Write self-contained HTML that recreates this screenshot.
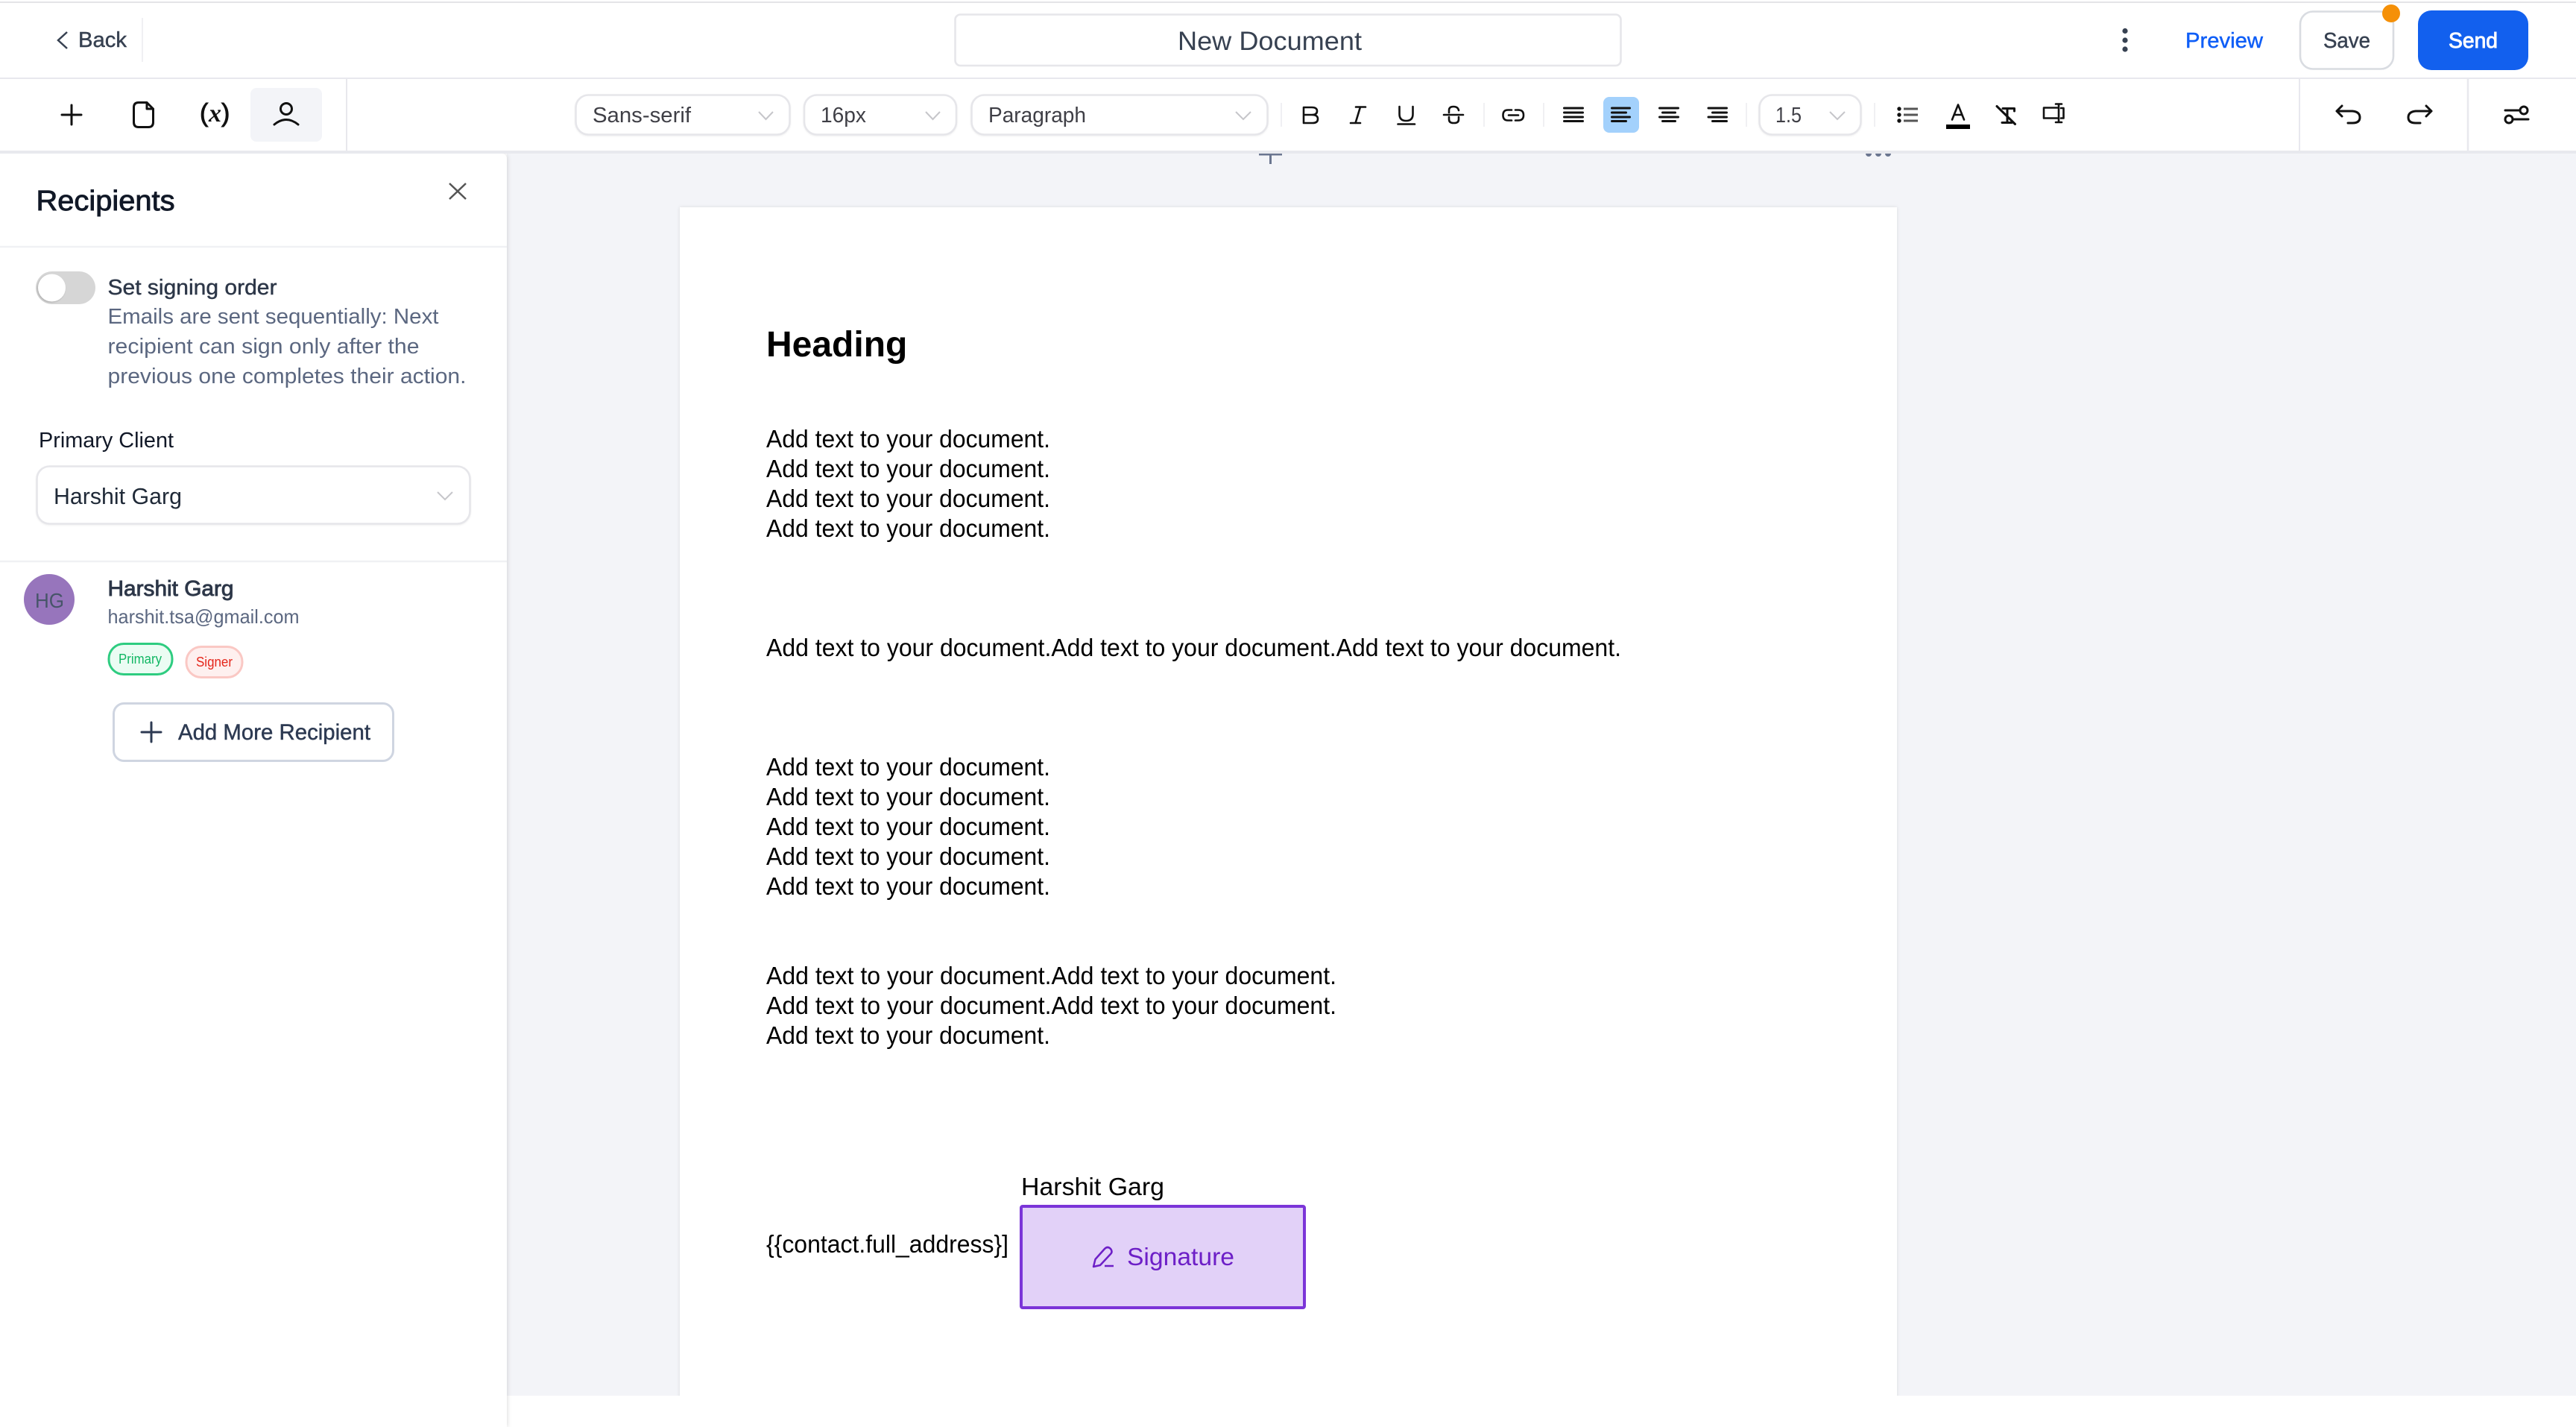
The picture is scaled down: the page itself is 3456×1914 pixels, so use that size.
<!DOCTYPE html>
<html lang="en"><head><meta charset="utf-8"><title>New Document</title>
<style>
html,body{margin:0;padding:0;background:#fff;width:3456px;height:1914px;overflow:hidden}
svg{display:block}
text{font-family:"Liberation Sans",sans-serif;white-space:pre}
.m{stroke:currentColor;stroke-width:.45px}
.sb{stroke:currentColor;stroke-width:.9px}
.d{font-size:33px;fill:#000}
.ic{fill:none;stroke:#111;stroke-width:3;stroke-linecap:round;stroke-linejoin:round}
.thin{stroke-width:2.6}
.box{fill:#fff;stroke:#e6e6ea;stroke-width:2.6;filter:drop-shadow(0 1px 1px rgba(0,0,0,.06))}
.chev{fill:none;stroke:#c6c6ca;stroke-width:2}
.sep{stroke:#f0f0f3;stroke-width:2}
.tb{font-size:28.5px;fill:#3f3f46}
</style></head><body>
<svg xmlns="http://www.w3.org/2000/svg" width="3456" height="1914" viewBox="0 0 3456 1914">
<defs>
<filter id="sh" x="-5%" y="-5%" width="110%" height="110%"><feDropShadow dx="0" dy="0" stdDeviation="2.500" flood-color="#000" flood-opacity=".1"/></filter>
<filter id="sh2" x="-5%" y="-5%" width="110%" height="110%"><feDropShadow dx="1" dy="0" stdDeviation="3" flood-color="#000" flood-opacity=".13"/></filter>
</defs>
<rect width="3456" height="1914" fill="#fff"/>
<!-- canvas -->
<rect x="680" y="206" width="2776" height="1666" fill="#f3f4f8"/>
<path d="M1689 207H1720M1704.500 207V220" fill="none" stroke="#6b7690" stroke-width="3"/>
<circle cx="2507" cy="206" r="4" fill="#6b7690"/><circle cx="2520" cy="206" r="4" fill="#6b7690"/><circle cx="2533" cy="206" r="4" fill="#6b7690"/>
<rect x="912" y="278" width="1633" height="1600" fill="#fff" filter="url(#sh)"/>
<rect x="680" y="1872" width="2776" height="42" fill="#fff"/>
<!-- document -->
<text x="1028" y="478" font-size="48" font-weight="700" fill="#000">Heading</text>
<text class="d" x="1028" y="600" textLength="381" lengthAdjust="spacingAndGlyphs">Add text to your document.</text>
<text class="d" x="1028" y="640" textLength="381" lengthAdjust="spacingAndGlyphs">Add text to your document.</text>
<text class="d" x="1028" y="680" textLength="381" lengthAdjust="spacingAndGlyphs">Add text to your document.</text>
<text class="d" x="1028" y="720" textLength="381" lengthAdjust="spacingAndGlyphs">Add text to your document.</text>
<text class="d" x="1028" y="880" textLength="1147" lengthAdjust="spacingAndGlyphs">Add text to your document.Add text to your document.Add text to your document.</text>
<text class="d" x="1028" y="1040" textLength="381" lengthAdjust="spacingAndGlyphs">Add text to your document.</text>
<text class="d" x="1028" y="1080" textLength="381" lengthAdjust="spacingAndGlyphs">Add text to your document.</text>
<text class="d" x="1028" y="1120" textLength="381" lengthAdjust="spacingAndGlyphs">Add text to your document.</text>
<text class="d" x="1028" y="1160" textLength="381" lengthAdjust="spacingAndGlyphs">Add text to your document.</text>
<text class="d" x="1028" y="1200" textLength="381" lengthAdjust="spacingAndGlyphs">Add text to your document.</text>
<text class="d" x="1028" y="1320" textLength="765" lengthAdjust="spacingAndGlyphs">Add text to your document.Add text to your document.</text>
<text class="d" x="1028" y="1360" textLength="765" lengthAdjust="spacingAndGlyphs">Add text to your document.Add text to your document.</text>
<text class="d" x="1028" y="1400" textLength="381" lengthAdjust="spacingAndGlyphs">Add text to your document.</text>
<text class="d" x="1370" y="1603" textLength="192" lengthAdjust="spacingAndGlyphs">Harshit Garg</text>
<text class="d" x="1028" y="1680" textLength="325" lengthAdjust="spacingAndGlyphs">{{contact.full_address}]</text>
<rect x="1370" y="1618" width="380" height="136" rx="2" fill="#e2d1f8" stroke="#7b35d8" stroke-width="4"/>
<path d="M1467 1699L1469.500 1689L1482 1675Q1486 1671 1490 1675Q1493 1679 1490 1682L1476 1697ZM1482 1698H1494" fill="none" stroke="#6d1fc7" stroke-width="2.500" stroke-linejoin="round"/>
<text x="1512" y="1697" font-size="33" fill="#6d1fc7" textLength="144" lengthAdjust="spacingAndGlyphs">Signature</text>
<!-- sidebar -->
<path d="M0 206H672Q680 206 680 214V1914H0Z" fill="#fff" filter="url(#sh2)"/>
<text x="48.500" y="282" font-size="38" fill="#111827" color="#111827" class="sb" textLength="186" lengthAdjust="spacingAndGlyphs">Recipients</text>
<path d="M603 246L625 267M625 246L603 267" fill="none" stroke="#555" stroke-width="2.500"/>
<line x1="0" y1="331" x2="680" y2="331" stroke="#f0f1f4" stroke-width="2.500"/>
<rect x="48" y="364" width="80" height="44" rx="22" fill="#d6d6d6"/>
<circle cx="69.500" cy="386" r="18.500" fill="#fff" style="filter:drop-shadow(-1px 1px 1px rgba(0,0,0,.2))"/>
<text x="144.500" y="395" font-size="29" fill="#2d3748" color="#2d3748" class="m" textLength="227" lengthAdjust="spacingAndGlyphs">Set signing order</text>
<text x="144.500" y="434" font-size="29" fill="#5b6780" textLength="444" lengthAdjust="spacingAndGlyphs">Emails are sent sequentially: Next</text>
<text x="144.500" y="474" font-size="29" fill="#5b6780" textLength="418" lengthAdjust="spacingAndGlyphs">recipient can sign only after the</text>
<text x="144.500" y="514" font-size="29" fill="#5b6780" textLength="481" lengthAdjust="spacingAndGlyphs">previous one completes their action.</text>
<text x="52" y="600" font-size="28.500" fill="#111827" textLength="181" lengthAdjust="spacingAndGlyphs">Primary Client</text>
<rect class="box" x="49.500" y="625.500" width="581" height="77" rx="17"/>
<text x="72" y="676" font-size="31" fill="#1f2937" textLength="172" lengthAdjust="spacingAndGlyphs">Harshit Garg</text>
<path class="chev" d="M587 660L597 670L607 660"/>
<line x1="0" y1="753" x2="680" y2="753" stroke="#f0f1f4" stroke-width="2.500"/>
<circle cx="66" cy="804" r="34" fill="#9775bc"/>
<text x="47" y="815" font-size="28" fill="#475569" textLength="39" lengthAdjust="spacingAndGlyphs">HG</text>
<text x="144.500" y="799" font-size="29" fill="#2d3748" color="#2d3748" class="sb" textLength="169" lengthAdjust="spacingAndGlyphs">Harshit Garg</text>
<text x="144.500" y="836" font-size="26" fill="#5b6780" textLength="257" lengthAdjust="spacingAndGlyphs">harshit.tsa@gmail.com</text>
<rect x="146" y="863.500" width="85" height="41" rx="20" fill="#ebfcf3" stroke="#2ecc80" stroke-width="3"/>
<text x="159" y="890" font-size="18" fill="#12b764" textLength="58" lengthAdjust="spacingAndGlyphs">Primary</text>
<rect x="250" y="867.500" width="75" height="41" rx="20" fill="#fef0ef" stroke="#fac8c4" stroke-width="3"/>
<text x="263" y="894" font-size="18" fill="#e5261b" textLength="49" lengthAdjust="spacingAndGlyphs">Signer</text>
<rect x="152.500" y="943.500" width="375" height="77" rx="14" fill="#fff" stroke="#cfd5e1" stroke-width="3"/>
<path d="M190 982H216M203 969V995" fill="none" stroke="#2d3a52" stroke-width="3" stroke-linecap="round"/>
<text x="239" y="992" font-size="29.500" fill="#2d3a52" color="#2d3a52" class="m" textLength="258" lengthAdjust="spacingAndGlyphs">Add More Recipient</text>
<!-- top bar -->
<rect x="0" y="0" width="3456" height="206" fill="#fff"/>
<rect x="0" y="2" width="3456" height="2" fill="#e4e4e7"/>
<rect x="0" y="104" width="3456" height="2" fill="#e8e8ee"/>
<rect x="0" y="202" width="3456" height="4" fill="#e8e9ee"/>
<path d="M90 43L78 54L90 65" fill="none" stroke="#374151" stroke-width="2.500"/>
<text x="105" y="63" font-size="29" fill="#374151" color="#374151" class="m" textLength="65" lengthAdjust="spacingAndGlyphs">Back</text>
<line class="sep" x1="191" y1="24" x2="191" y2="83"/>
<rect x="1281.500" y="19.500" width="893" height="68.500" rx="7" fill="#fff" stroke="#e6e6ea" stroke-width="2.600"/>
<text x="1580" y="67" font-size="35" fill="#374151" textLength="247" lengthAdjust="spacingAndGlyphs">New Document</text>
<circle cx="2851" cy="41.500" r="3.600" fill="#374151"/><circle cx="2851" cy="54" r="3.600" fill="#374151"/><circle cx="2851" cy="66" r="3.600" fill="#374151"/>
<text x="2932" y="64" font-size="29" fill="#0f5ef7" color="#0f5ef7" class="m" textLength="104" lengthAdjust="spacingAndGlyphs">Preview</text>
<rect x="3086" y="15.500" width="125" height="77" rx="17" fill="#fff" stroke="#d9dce1" stroke-width="2.600"/>
<text x="3117" y="64" font-size="29" fill="#374151" color="#374151" class="m" textLength="63" lengthAdjust="spacingAndGlyphs">Save</text>
<circle cx="3208" cy="18" r="12" fill="#f59008"/>
<rect x="3244" y="14" width="148" height="80" rx="18" fill="#1260ee"/>
<text x="3285" y="64" font-size="29" fill="#fff" color="#fff" class="sb" textLength="66" lengthAdjust="spacingAndGlyphs">Send</text>
<!-- toolbar left -->
<path class="ic" d="M83 154H109M96 141V167"/>
<path class="ic" d="M197 137.500H186Q179.500 137.500 179.500 144V164Q179.500 170.500 186 170.500H199Q205.500 170.500 205.500 164V146ZM197 137.500V146H205.500"/>
<text x="268" y="163" font-size="34" fill="#111" color="#111" class="sb">(</text>
<text x="280" y="163" style='font-family:"Liberation Serif",serif' font-size="34" font-style="italic" font-weight="700" fill="#111">x</text>
<text x="297" y="163" font-size="34" fill="#111" color="#111" class="sb">)</text>
<rect x="336" y="118" width="96" height="72" rx="8" fill="#f3f4f8"/>
<circle cx="384" cy="146" r="7.500" class="ic"/>
<path class="ic" d="M368 167Q384 154 400 167"/>
<line x1="465" y1="106" x2="465" y2="202" stroke="#e8e8ec" stroke-width="2"/>
<!-- selects -->
<rect class="box" x="772.500" y="127.500" width="287" height="53" rx="17"/>
<text class="tb" x="795" y="164" textLength="132" lengthAdjust="spacingAndGlyphs">Sans-serif</text>
<path class="chev" d="M1018 150L1027.500 160L1037 150"/>
<rect class="box" x="1079" y="127.500" width="204" height="53" rx="17"/>
<text class="tb" x="1101" y="164" textLength="61" lengthAdjust="spacingAndGlyphs">16px</text>
<path class="chev" d="M1242 150L1251.500 160L1261 150"/>
<rect class="box" x="1303.500" y="127.500" width="397" height="53" rx="17"/>
<text class="tb" x="1326" y="164" textLength="131" lengthAdjust="spacingAndGlyphs">Paragraph</text>
<path class="chev" d="M1658 150L1668 160L1678 150"/>
<line class="sep" x1="1719" y1="138" x2="1719" y2="170"/>
<!-- B I U S -->
<path class="ic thin" d="M1749 154V144H1760Q1767 144 1767 149Q1767 154 1760 154H1749V165H1761Q1768 165 1768 159.500Q1768 154 1760 154"/>
<path class="ic thin" d="M1819 143.500H1832M1812 165H1825M1825 143.500L1818.500 165"/>
<path class="ic thin" d="M1877.500 143V153Q1877.500 162 1886.500 162Q1895.500 162 1895.500 153V143M1875.500 166.500H1898"/>
<path class="ic thin" d="M1944 151V148Q1944 143 1950 143Q1956 143 1957 148M1937 154H1963M1944 157V160Q1944 165 1950 165H1951Q1957 165 1957 160V157"/>
<line class="sep" x1="1991" y1="138" x2="1991" y2="170"/>
<path class="ic thin" d="M2028 147.500H2023Q2016.500 147.500 2016.500 154.500Q2016.500 161.500 2023 161.500H2028M2033 147.500H2037Q2044 147.500 2044 154.500Q2044 161.500 2037 161.500H2033M2024 154.500H2037"/>
<line class="sep" x1="2071" y1="138" x2="2071" y2="170"/>
<!-- align -->
<path class="ic" d="M2098.500 145H2123.500M2098.500 151H2123.500M2098.500 157H2123.500M2098.500 162.500H2123.500"/>
<rect x="2151" y="130" width="48" height="48" rx="8" fill="#a3d1fc"/>
<path class="ic" d="M2162.500 145H2186.500M2162.500 151H2181.500M2162.500 157H2186.500M2162.500 162.500H2181.500"/>
<path class="ic" d="M2226.500 145H2251.500M2230.500 151H2247.500M2226.500 157H2251.500M2230.500 162.500H2247.500"/>
<path class="ic" d="M2292 145H2316.500M2297.500 151H2316.500M2292 157H2316.500M2297.500 162.500H2316.500"/>
<line class="sep" x1="2343" y1="138" x2="2343" y2="170"/>
<rect class="box" x="2360.500" y="127.500" width="136" height="53" rx="17"/>
<text class="tb" x="2382" y="164" textLength="35" lengthAdjust="spacingAndGlyphs">1.5</text>
<path class="chev" d="M2455 150L2465 160L2475 150"/>
<line class="sep" x1="2515" y1="138" x2="2515" y2="170"/>
<!-- list etc -->
<circle cx="2548" cy="146" r="2.700" fill="#111"/><circle cx="2548" cy="154" r="2.700" fill="#111"/><circle cx="2548" cy="162" r="2.700" fill="#111"/>
<path d="M2554 146H2573M2554 154H2573M2554 162H2573" fill="none" stroke="#555" stroke-width="3"/>
<path class="ic thin" d="M2619 160.500L2627 140.500L2635 160.500M2622 154H2632"/>
<rect x="2611" y="167" width="32" height="6" fill="#000"/>
<path class="ic" d="M2679 142.500L2703.500 166.500M2687 145.500H2702.500V149M2693 146V164M2686 164.500H2699"/>
<path class="ic thin" d="M2760 144.500H2742V158.500H2760M2762 139.500V164M2758 139.500H2766M2758 164H2766M2765 145H2768.500V158.500H2765"/>
<line x1="3085" y1="106" x2="3085" y2="202" stroke="#e8e8ee" stroke-width="2"/>
<path class="ic" d="M3142 142L3135 149L3142 156M3135 149H3156Q3166 150 3166 157.500Q3166 165 3156 165H3150"/>
<path class="ic" d="M3255 142L3262 149L3255 156M3262 149H3241Q3231 150 3231 157.500Q3231 165 3241 165H3247"/>
<line x1="3311" y1="106" x2="3311" y2="202" stroke="#e8e8ee" stroke-width="2.500"/>
<path class="ic" d="M3361 148H3381M3372 160H3392"/>
<circle cx="3386" cy="148" r="5" class="ic"/><circle cx="3366" cy="160" r="5" class="ic"/>
</svg>
</body></html>
